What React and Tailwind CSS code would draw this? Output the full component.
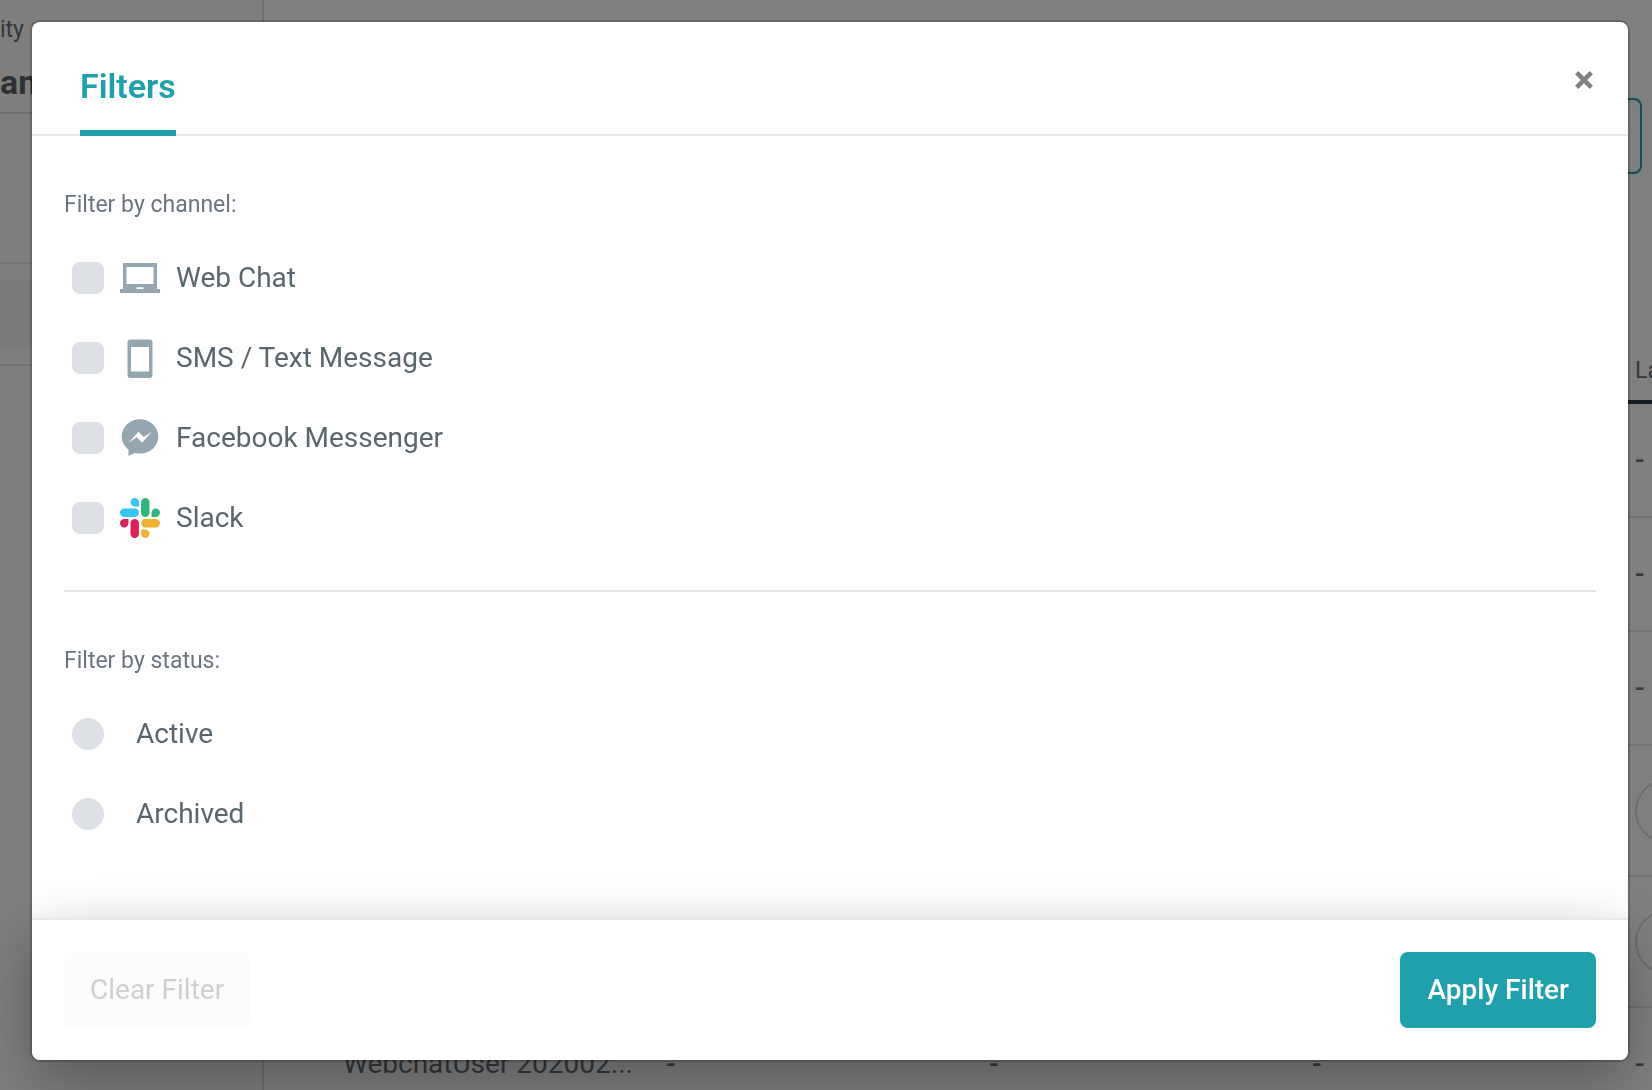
import { useState } from 'react';

const channels = [
  { id: 'webchat', label: 'Web Chat', Icon: LaptopIcon },
  { id: 'sms', label: 'SMS / Text Message', Icon: PhoneIcon },
  { id: 'messenger', label: 'Facebook Messenger', Icon: MessengerIcon },
  { id: 'slack', label: 'Slack', Icon: SlackIcon }
];

const statuses = [
  { id: 'active', label: 'Active' },
  { id: 'archived', label: 'Archived' }
];

function LaptopIcon() {
  return (
    <svg viewBox="0 0 40 40" className="size-10 text-[#95a6b0]" fill="currentColor" aria-hidden="true">
      <path fillRule="evenodd" d="M3 5h34v26h3v4H0v-4h3zM6.5 9v17h27V9zM16.5 29.2h7v1.8h-7z" />
    </svg>
  );
}

function PhoneIcon() {
  return (
    <svg viewBox="0 0 40 40" className="size-10 text-[#95a6b0]" fill="currentColor" aria-hidden="true">
      <path
        fillRule="evenodd"
        d="M10.5 1.5h19a3 3 0 0 1 3 3V37a3 3 0 0 1-3 3h-19a3 3 0 0 1-3-3V4.5a3 3 0 0 1 3-3zM11 9v24.5h18V9z"
      />
    </svg>
  );
}

function MessengerIcon() {
  return (
    <svg viewBox="0 0 40 40" className="size-10 text-[#95a6b0]" aria-hidden="true">
      <path
        fill="currentColor"
        d="M20 1.3C9.9 1.3 1.7 8.9 1.7 18.5c0 5.4 2.6 9.7 6.8 12.9V38l6.3-3.1c1.6.5 3.4.7 5.2.7 10.1 0 18.3-7.5 18.3-17.1S30.1 1.3 20 1.3z"
      />
      <path fill="#fff" d="M8.5 24.7 18.5 13.7l5.3 5.3 8-5.3-9.6 11-5.3-5.4z" />
    </svg>
  );
}

function SlackIcon() {
  return (
    <svg viewBox="0 0 24 24" className="size-10" aria-hidden="true">
      <path
        fill="#e01e5a"
        d="M5.042 15.165a2.528 2.528 0 0 1-2.52 2.523A2.528 2.528 0 0 1 0 15.165a2.527 2.527 0 0 1 2.522-2.52h2.52v2.52zM6.313 15.165a2.527 2.527 0 0 1 2.521-2.52 2.527 2.527 0 0 1 2.521 2.52v6.313A2.528 2.528 0 0 1 8.834 24a2.528 2.528 0 0 1-2.521-2.522v-6.313z"
      />
      <path
        fill="#36c5f0"
        d="M8.834 5.042a2.528 2.528 0 0 1-2.521-2.52A2.528 2.528 0 0 1 8.834 0a2.528 2.528 0 0 1 2.521 2.522v2.52H8.834zM8.834 6.313a2.528 2.528 0 0 1 2.521 2.521 2.528 2.528 0 0 1-2.521 2.521H2.522A2.528 2.528 0 0 1 0 8.834a2.528 2.528 0 0 1 2.522-2.521h6.312z"
      />
      <path
        fill="#2eb67d"
        d="M18.956 8.834a2.528 2.528 0 0 1 2.522-2.521A2.528 2.528 0 0 1 24 8.834a2.528 2.528 0 0 1-2.522 2.521h-2.522V8.834zM17.688 8.834a2.528 2.528 0 0 1-2.523 2.521 2.527 2.527 0 0 1-2.52-2.521V2.522A2.527 2.527 0 0 1 15.165 0a2.528 2.528 0 0 1 2.523 2.522v6.312z"
      />
      <path
        fill="#ecb22e"
        d="M15.165 18.956a2.528 2.528 0 0 1 2.523 2.522A2.528 2.528 0 0 1 15.165 24a2.527 2.527 0 0 1-2.52-2.522v-2.522h2.52zM15.165 17.688a2.527 2.527 0 0 1-2.52-2.523 2.526 2.526 0 0 1 2.52-2.52h6.313A2.527 2.527 0 0 1 24 15.165a2.528 2.528 0 0 1-2.522 2.523h-6.313z"
      />
    </svg>
  );
}

const Sidebar = () => (
  <aside className="w-[264px] shrink-0 border-r-2 border-[#dedfe2] bg-[#fefdf9] text-[#66707a]">
    <div className="h-[114px] border-b-2 border-[#dedfe4] pt-3">
      <div className="text-[23px] leading-9">ity</div>
      <div className="pt-3.5 text-[34px] leading-10 font-bold text-[#59636c]">an</div>
    </div>
    <div className="h-[150px] border-b-2 border-[#e4e4e2]" />
    <div className="border-b-2 border-[#e4e4e2] pt-4 pb-[17px]">
      <div className="h-[67px] bg-[#f2f4f8]" />
    </div>
  </aside>
);

const HeadCell = ({ children }) => (
  <th className="border-b-4 border-[#2b3a42] p-0 pb-3 align-bottom text-[23px] font-normal">{children}</th>
);

const Cell = ({ children }) => (
  <td className="border-b-2 border-[#e6e6e6] p-0 font-medium">{children}</td>
);

const Contacts = () => (
  <main className="min-w-0 flex-1 overflow-hidden bg-white text-[#66707a]">
    <div className="flex justify-end pt-[98px] pr-[10px]">
      <button type="button" className="h-[76px] w-[196px] rounded-lg border-2 border-[#1ea0ad]" aria-label="Filter contacts" />
    </div>
    <table className="mt-[156px] ml-[79px] w-[1615px] table-fixed border-separate border-spacing-0 text-left text-[28px]">
      <thead>
        <tr className="h-[74px]">
          <HeadCell />
          <HeadCell />
          <HeadCell />
          <HeadCell />
          <HeadCell>La</HeadCell>
        </tr>
      </thead>
      <tbody>
        {[0, 1, 2].map((row) => (
          <tr key={row} className="h-[114px]">
            <Cell />
            <Cell />
            <Cell />
            <Cell />
            <Cell>-</Cell>
          </tr>
        ))}
        {[3, 4].map((row) => (
          <tr key={row} className="h-[131px]">
            <Cell />
            <Cell />
            <Cell />
            <Cell />
            <Cell>
              <div className="size-16 rounded-full border-2 border-[#dcdcdc]" />
            </Cell>
          </tr>
        ))}
        <tr className="h-[114px]">
          <Cell>
            <span className="font-normal">WebchatUser 202002...</span>
          </Cell>
          <Cell>-</Cell>
          <Cell>-</Cell>
          <Cell>-</Cell>
          <Cell>-</Cell>
        </tr>
      </tbody>
    </table>
  </main>
);

const FiltersModal = () => {
  const [selected, setSelected] = useState([]);
  const [status, setStatus] = useState(null);

  const toggle = (id) =>
    setSelected((prev) => (prev.includes(id) ? prev.filter((c) => c !== id) : [...prev, id]));

  const clear = () => {
    setSelected([]);
    setStatus(null);
  };

  const isEmpty = selected.length === 0 && !status;

  return (
    <div
      role="dialog"
      aria-modal="true"
      aria-labelledby="filters-title"
      className="rounded-lg bg-white text-[#5a666d] shadow-[0_0_0_2px_rgba(0,0,0,0.2)]"
    >
      <header className="flex justify-between border-b-2 border-[#e6eaee] pr-[35px] pl-12">
        <h2
          id="filters-title"
          className="-mb-0.5 border-b-6 border-[#1ea0ad] pt-10 pb-5 text-[34px] leading-12 font-semibold text-[#1ea0ad]"
        >
          Filters
        </h2>
        <button type="button" aria-label="Close" className="mt-[49px] size-[18px] text-[#808080]">
          <svg viewBox="0 0 18 18" className="size-full" fill="none" stroke="currentColor" strokeWidth="4.5" aria-hidden="true">
            <path d="M1.7 1.7l14.6 14.6M16.3 1.7L1.7 16.3" />
          </svg>
        </button>
      </header>

      <div className="px-8">
        <fieldset className="border-b-2 border-[#e4e5e5] pt-12 pb-8">
          <legend className="float-left mb-3 w-full text-[23px] leading-[42px] text-[#6b7580]">Filter by channel:</legend>
          {channels.map(({ id, label, Icon }) => (
            <label key={id} className="clear-both flex h-20 items-center gap-4 pl-2 text-[28px]">
              <input
                type="checkbox"
                checked={selected.includes(id)}
                onChange={() => toggle(id)}
                className="size-8 appearance-none rounded-lg bg-[#dde1e6] checked:bg-[#1ea0ad]"
              />
              <Icon />
              {label}
            </label>
          ))}
        </fieldset>

        <fieldset className="pt-12 pb-16">
          <legend className="float-left mb-3 w-full text-[23px] leading-[42px] text-[#6b7580]">Filter by status:</legend>
          {statuses.map(({ id, label }) => (
            <label key={id} className="clear-both flex h-20 items-center gap-8 pl-2 text-[28px]">
              <input
                type="radio"
                name="status"
                checked={status === id}
                onChange={() => setStatus(id)}
                className="size-8 appearance-none rounded-full bg-[#dde1e6] checked:bg-[#1ea0ad]"
              />
              {label}
            </label>
          ))}
        </fieldset>
      </div>

      <footer className="flex items-center justify-between rounded-b-lg border-t-2 border-[#e6eaee] bg-white p-8 shadow-[0_20px_60px_rgba(0,0,0,0.3)]">
        <button
          type="button"
          disabled={isEmpty}
          onClick={clear}
          className="h-[76px] rounded-lg bg-[#fcfcfc] px-[26px] text-[28px] text-[#cfcfcf]"
        >
          Clear Filter
        </button>
        <button type="button" className="h-[76px] rounded-lg bg-[#1ea0ad] px-[27px] text-[28px] font-medium text-white">
          Apply Filter
        </button>
      </footer>
    </div>
  );
};

export default function App() {
  return (
    <div className="font-[Roboto,sans-serif]">
      <div className="flex h-screen overflow-hidden">
        <Sidebar />
        <Contacts />
      </div>
      <div className="fixed inset-0 overflow-hidden bg-black/50 pt-[22px] pr-6 pl-8">
        <FiltersModal />
      </div>
    </div>
  );
}
